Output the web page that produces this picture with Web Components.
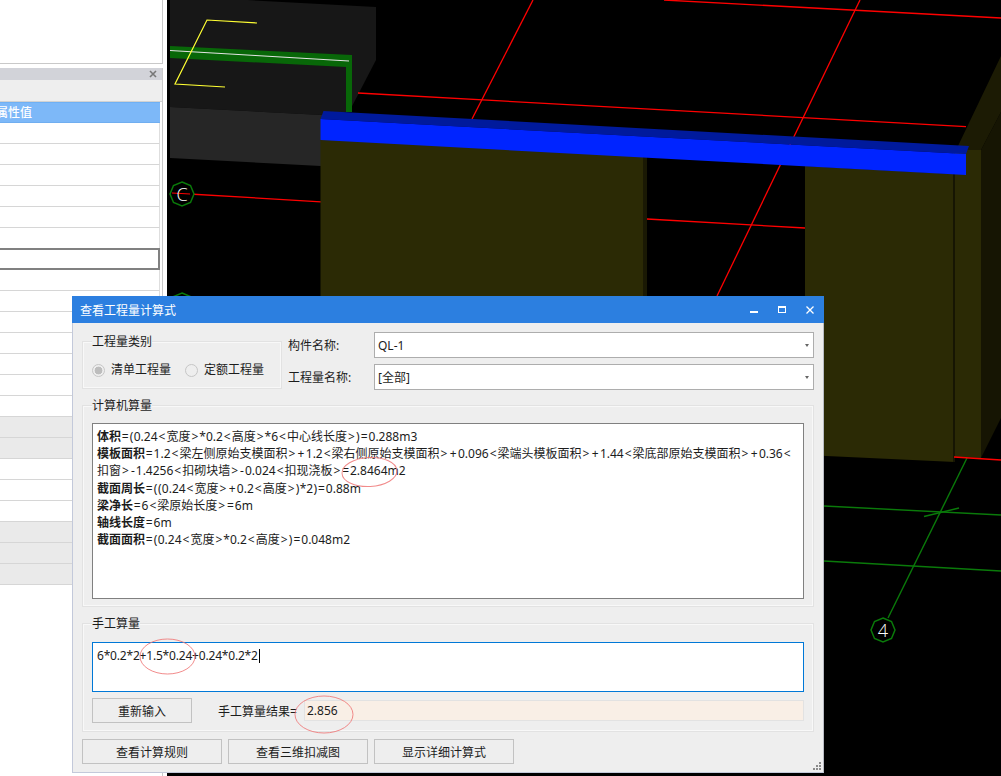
<!DOCTYPE html>
<html lang="zh"><head><meta charset="utf-8"><title>查看工程量计算式</title>
<style>
html,body{margin:0;padding:0;height:100%;overflow:hidden;background:#000}
body{font:12px "Noto Sans","Noto Sans CJK SC",sans-serif;color:#1c1c1c}
</style></head><body>
<app-desktop></app-desktop>
<script>
function def(name, html){
  customElements.define(name, class extends HTMLElement{
    constructor(){super();const t=document.createElement('template');t.innerHTML=html;this.attachShadow({mode:'open'}).appendChild(t.content.cloneNode(true));}
  });
}
const font='"Noto Sans","Noto Sans CJK SC",sans-serif';
function f(s){
  return s.replace(/[<>]|[=+\-]|[()]/g,c=>{
    const k=c==='<'||c==='>'?'b':c==='('||c===')'?'p':c==='-'?'m':c==='+'?'a':'e';
    return '<span class="'+k+'">'+c.replace('<','&lt;').replace('>','&gt;')+'</span>';
  });
}
function line(term,rest){return '<formula-line>'+(term?'<b>'+term+'</b>':'')+f(rest)+'</formula-line>';}

def('prop-row',`<style>:host{display:block;box-sizing:border-box;height:21px;width:160px;background:#fff;border-bottom:1px solid #d6d6d6;border-right:1px solid #dedede}
:host([shade]){background:#eaeaea}
:host([sel]){height:22px;margin-top:-1px;border:2px solid #808080;border-left-width:0}</style><slot></slot>`);

let rows='';
for(let i=0;i<22;i++){const sel=i===6,sh=(i>=14&&i<=15)||(i>=19);rows+=`<prop-row${sel?' sel':''}${sh?' shade':''}></prop-row>`;}
def('prop-panel',`<style>
:host{display:flex;flex-direction:column;width:167px;flex:none;background:#fff;height:776px;overflow:hidden;font:12px ${font}}
.wrap{width:163px;box-sizing:border-box;border-right:1px solid #c9c9c9}
.top{height:64px;border-bottom:1px solid #c9c9c9;box-sizing:border-box}
.gap{height:4px;width:163px}
.main{flex:1;display:flex;flex-direction:column}
.cap{height:12px;background:#d2d3d9;display:flex;justify-content:flex-end;align-items:center;padding-right:5px}
.cap svg{display:block}
.tool{height:22px;box-sizing:border-box;background:#eee;border-bottom:1px solid #d2d2d2}
.head{height:21px;width:160px;box-sizing:border-box;background:#7db8f8;border-top:1px solid #6fb0f4;border-bottom:1px solid #70aef0;color:#fff;font-size:12px;line-height:19px;overflow:hidden;white-space:nowrap;font-weight:500}
.head span{display:block;margin-left:-4px}
</style>
<div class="wrap top"></div><div class="gap"></div>
<div class="wrap main">
<div class="cap"><svg width="8" height="8" viewBox="0 0 8 8"><path d="M1 1 7 7M7 1 1 7" stroke="#777" stroke-width="1.6"/></svg></div>
<div class="tool"></div>
<div class="head"><span>属性值</span></div>
${rows}
</div>`);

def('scene-view',`<style>:host{display:block;flex:1;min-width:0;background:#000;height:776px;overflow:hidden}svg{display:block}
text{font-family:"Open Sans",sans-serif;font-size:18px;font-weight:300;fill:#fff;text-anchor:middle}</style>
<svg width="834" height="776" viewBox="167 0 834 776" xmlns="http://www.w3.org/2000/svg">
<rect x="167" y="0" width="834" height="776" fill="#000"/>
<polygon points="170,0 247,0 376,7 376,60 349,112 322,115 170,107" fill="#171717"/>
<polygon points="170,107 322,115 321,166 170,158" fill="#262626"/>
<polygon points="170,46 352,55 352,112 346,112 346,67 170,58" fill="#086708"/>
<line x1="170" y1="50.5" x2="349" y2="61" stroke="#e4e4e4" stroke-width="1"/>
<polyline points="257,23 207,20 175,84 225,87" fill="none" stroke="#ffff33" stroke-width="1.2"/>
<g stroke="#f00" stroke-width="1.3" fill="none">
<line x1="358" y1="93" x2="966" y2="126.6"/>
<line x1="664" y1="0" x2="1001" y2="18"/>
<line x1="533" y1="0" x2="472" y2="119"/>
<line x1="860" y1="0" x2="717" y2="296"/>
<line x1="172" y1="193" x2="321" y2="201.8"/>
<line x1="647" y1="219" x2="805" y2="228"/>
</g>
<polygon points="320.5,139 647,157 647,470 320.5,450" fill="#2b2a05"/>
<rect x="643" y="150" width="4" height="320" fill="#1a1904"/>
<polygon points="805,166 955,174 955,462 805,455" fill="#2b2a05"/>
<polygon points="955,150 981,150 981,458 955,457" fill="#2b2a05"/>
<rect x="953" y="150" width="2" height="312" fill="#161503"/>
<polygon points="958,146 1001,56 1001,112 981,150 955,150" fill="#1c1b04"/>
<polygon points="981,150 1001,112 1001,418 981,458" fill="#161503"/>
<polygon points="323.5,111 969,146 966,154 320.5,119" fill="#001a9c"/>
<polygon points="320.5,119 966,154 966,175 320.5,140" fill="#0024ff"/>
<g stroke="#0a7a0a" stroke-width="1.4" fill="none">
<line x1="824" y1="506" x2="1001" y2="515"/>
<line x1="824" y1="561" x2="1001" y2="571"/>
<line x1="967" y1="458" x2="888" y2="618"/>
<line x1="924" y1="516.5" x2="959" y2="508"/>
</g>
<line x1="954" y1="457" x2="1001" y2="460" stroke="#f00" stroke-width="1.4"/>
<g stroke="#0a7a0a" stroke-width="1.5" fill="#000">
<polygon points="182,182 190.5,185.5 194,194 190.5,202.5 182,206 173.5,202.5 170,194 173.5,185.5"/>
<polygon points="182,293 190.5,296.5 194,305 190.5,313.5 182,317 173.5,313.5 170,305 173.5,296.5"/>
<polygon points="883,618 891.5,621.5 895,630 891.5,638.5 883,642 874.5,638.5 871,630 874.5,621.5"/>
</g>
<line x1="172" y1="193" x2="190" y2="194" stroke="#f00" stroke-width="1"/>
<text x="182" y="200.5">C</text>
<text x="883" y="636.5">4</text>
</svg>`);

def('field-group',`<style>:host{display:block;box-sizing:border-box;border:1px solid #e2e2e2;box-shadow:inset 0 0 0 1px #f8f8f8;padding:0 9px}
.lg{display:block;width:fit-content;height:16px;line-height:16px;margin-top:-8px;background:#eee;font-size:12px;color:#1c1c1c}</style>
<div class="lg"><slot name="legend"></slot></div><slot></slot>`);

def('radio-option',`<style>:host{display:inline-flex;align-items:center;gap:6px;font-size:12px;line-height:16px;color:#1c1c1c}
i{display:block;box-sizing:border-box;width:13px;height:13px;border:1px solid #c6c6c6;border-radius:50%;position:relative;background:#eee}
:host([checked]) i{background:radial-gradient(circle at 50% 50%,#bdbdbd 0 3.6px,#eee 4.2px)}</style><i></i><span><slot></slot></span>`);

def('combo-box',`<style>:host{display:flex;align-items:center;justify-content:space-between;box-sizing:border-box;height:26px;border:1px solid #adadad;background:#fff;padding:0 4px 0 3px;font-size:12px;color:#1c1c1c}
i{display:block;width:0;height:0;border:2.5px solid transparent;border-top:3.5px solid #666;border-bottom:0}</style><span><slot></slot></span><i></i>`);

def('push-button',`<style>:host{display:flex;align-items:center;justify-content:center;box-sizing:border-box;height:25px;border:1px solid #c2c2c2;background:#eee;font-size:12px;color:#1c1c1c;flex:none}</style><slot></slot>`);

def('formula-line',`<style>:host{display:block;white-space:nowrap;line-height:17.2px;font-size:12px;color:#1c1c1c}
::slotted(b){font-weight:700}</style><slot></slot>`);

def('calc-dialog',`<style>
:host{position:absolute;left:72px;top:296px;width:752px;height:477px;display:flex;flex-direction:column;font:12px ${font};color:#1c1c1c}
.title{height:27px;flex:none;background:#2c7fe0;color:#fff;display:flex;align-items:center;padding-left:8px}
.title span{flex:1}
.title svg{display:block}
.body{flex:1;box-sizing:border-box;background:#eee;border:1px solid #c3c9da;border-top:0;border-right-color:#b9bcc4;padding:9px 9px 0}
.top{display:flex;height:58px}
.kind{width:200px;height:48px;margin-top:9px;flex:none}
.radios{display:flex;align-items:center;height:38px;margin-top:1px}
.radios radio-option+radio-option{margin-left:14px}
.sel{flex:1;margin-left:6px;display:grid;grid-template-columns:86px 1fr;grid-auto-rows:26px;row-gap:6px;align-items:center}
.auto{height:202px;margin-top:15px}
.box{box-sizing:border-box;margin-top:9px;height:176px;background:#fff;border:1px solid #808080;padding:4px 4px 0}
.box span.b{padding:0 1px}
.box span.e{padding:0 .85px}
.box span.p{padding:0 .25px}
.box span.m{padding:0 1px}
.box span.a{padding:0 1.3px}
.manual{height:109px;margin-top:16px}
.input{box-sizing:border-box;margin-top:10px;height:50px;background:#fff;border:1px solid #0078d7;padding:4px 4px 0;line-height:17px;display:flex;letter-spacing:-.19px}
.caret{display:block;width:1px;height:14px;background:#000;margin:2px 0 0 1px}
.res{display:flex;align-items:center;margin-top:6px}
.res .lbl{margin-left:26px;width:86px;flex:none;white-space:nowrap}
.out{flex:1;box-sizing:border-box;height:21px;line-height:19px;background:#f9efe6;border:1px solid #e2e2e2;padding-left:2px}
.btns{display:flex;gap:6px;margin-top:7px}
.btns push-button{width:140px}
.grip{position:absolute;right:3px;bottom:3px;display:block}
.marks{position:absolute;left:0;top:0;pointer-events:none}
</style>
<div class="title"><span>查看工程量计算式</span>
<svg width="74" height="27" viewBox="0 0 74 27"><rect x="0" y="15" width="8" height="2" fill="#fff"/><rect x="28.5" y="10.5" width="7" height="6" fill="none" stroke="#fff"/><rect x="28" y="10" width="8" height="2" fill="#fff"/><path d="M56.5 10.5 63.5 17.5M63.5 10.5 56.5 17.5" stroke="#fff" stroke-width="1.3"/></svg></div>
<div class="body">
<div class="top">
<field-group class="kind"><span slot="legend">工程量类别</span>
<div class="radios"><radio-option checked>清单工程量</radio-option><radio-option>定额工程量</radio-option></div></field-group>
<div class="sel"><span>构件名称:</span><combo-box>QL-1</combo-box><span>工程量名称:</span><combo-box>[全部]</combo-box></div>
</div>
<field-group class="auto"><span slot="legend">计算机算量</span>
<div class="box">
${line('体积','=(0.24<宽度>*0.2<高度>*6<中心线长度>)=0.288m3')}
${line('模板面积','=1.2<梁左侧原始支模面积>+1.2<梁右侧原始支模面积>+0.096<梁端头模板面积>+1.44<梁底部原始支模面积>+0.36<')}
${line('','扣窗>-1.4256<扣砌块墙>-0.024<扣现浇板>=2.8464m2')}
${line('截面周长','=((0.24<宽度>+0.2<高度>)*2)=0.88m')}
${line('梁净长','=6<梁原始长度>=6m')}
${line('轴线长度','=6m')}
${line('截面面积','=(0.24<宽度>*0.2<高度>)=0.048m2')}
</div></field-group>
<field-group class="manual"><span slot="legend">手工算量</span>
<div class="input"><span>6*0.2*2+1.5*0.24+0.24*0.2*2</span><i class="caret"></i></div>
<div class="res"><push-button style="width:100px">重新输入</push-button><span class="lbl">手工算量结果=</span><div class="out">2.856</div></div>
</field-group>
<div class="btns"><push-button>查看计算规则</push-button><push-button>查看三维扣减图</push-button><push-button>显示详细计算式</push-button></div>
</div>
<svg class="grip" width="8" height="8" viewBox="0 0 8 8" fill="#8a8a8a"><rect x="6" y="0" width="2" height="2"/><rect x="3" y="3" width="2" height="2"/><rect x="6" y="3" width="2" height="2"/><rect x="0" y="6" width="2" height="2"/><rect x="3" y="6" width="2" height="2"/><rect x="6" y="6" width="2" height="2"/></svg>
<svg class="marks" width="752" height="477" viewBox="72 296 752 477" fill="none" stroke="#ee7777" stroke-opacity=".85" stroke-width="1">
<ellipse cx="369.5" cy="472" rx="27.5" ry="14.5" transform="rotate(-3 369.5 472)"/>
<ellipse cx="167.5" cy="656.5" rx="27.5" ry="17.5"/>
<ellipse cx="324" cy="714.5" rx="29" ry="18.5"/>
</svg>`);

def('app-desktop',`<style>:host{display:flex;position:relative;width:1001px;height:776px;overflow:hidden;background:#000}</style>
<prop-panel></prop-panel><scene-view></scene-view><calc-dialog></calc-dialog>`);
</script>
</body></html>
